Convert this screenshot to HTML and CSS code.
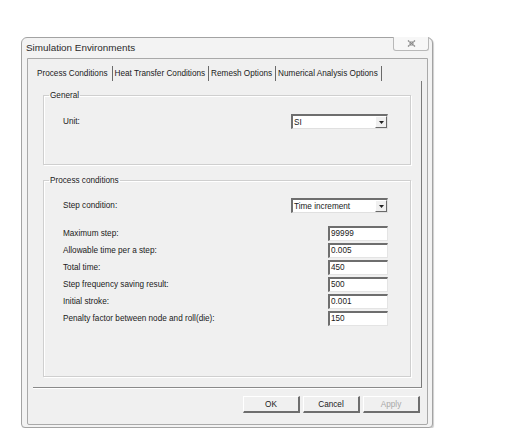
FILE: index.html
```html
<!DOCTYPE html>
<html>
<head>
<meta charset="utf-8">
<link rel="stylesheet" href="styles.css">
</head>
<body>
<div class="window">
  <div class="titlebar">
    <span class="title">Simulation Environments</span>
    <div class="close">
      <svg width="9" height="7" viewBox="0 0 9 7"><path d="M1 0.5 L8 6.5 M8 0.5 L1 6.5" stroke="#8a8a8a" stroke-width="1.3" fill="none"/><rect x="2.5" y="1.5" width="4" height="4" fill="none" stroke="#b5b5b5" stroke-width="0.8"/></svg>
    </div>
  </div>
  <div class="client">
    <div class="tabs">
      <div class="tab sel">Process Conditions</div>
      <div class="tab">Heat Transfer Conditions</div>
      <div class="tab">Remesh Options</div>
      <div class="tab">Numerical Analysis Options</div>
    </div>
    <div class="panel">
      <fieldset class="group g1">
        <legend>General</legend>
        <div class="row combo-row">
          <span class="lbl">Unit:</span>
          <div class="combo"><span class="ctext">SI</span><span class="cbtn"><svg width="5" height="3" viewBox="0 0 5 3"><path d="M0 0 H5 L2.5 3 Z" fill="#222"/></svg></span></div>
        </div>
      </fieldset>
      <fieldset class="group g2">
        <legend>Process conditions</legend>
        <div class="row combo-row">
          <span class="lbl">Step condition:</span>
          <div class="combo"><span class="ctext">Time increment</span><span class="cbtn"><svg width="5" height="3" viewBox="0 0 5 3"><path d="M0 0 H5 L2.5 3 Z" fill="#222"/></svg></span></div>
        </div>
        <div class="fields">
          <div class="row"><span class="lbl">Maximum step:</span><div class="input">99999</div></div>
          <div class="row"><span class="lbl">Allowable time per a step:</span><div class="input">0.005</div></div>
          <div class="row"><span class="lbl">Total time:</span><div class="input">450</div></div>
          <div class="row"><span class="lbl">Step frequency saving result:</span><div class="input">500</div></div>
          <div class="row"><span class="lbl">Initial stroke:</span><div class="input">0.001</div></div>
          <div class="row"><span class="lbl">Penalty factor between node and roll(die):</span><div class="input">150</div></div>
        </div>
      </fieldset>
    </div>
    <div class="buttons">
      <div class="btn">OK</div>
      <div class="btn">Cancel</div>
      <div class="btn dis">Apply</div>
    </div>
  </div>
</div>
</body>
</html>
```
FILE: styles.css
```css
html, body {
  margin: 0;
  padding: 0;
  background: #ffffff;
}
body {
  padding: 37px 0 0 21px;
  font-family: "Liberation Sans", Arial, sans-serif;
  font-size: 8.2px;
  color: #1a1a1a;
}
.window {
  box-sizing: border-box;
  width: 412px;
  height: 391px;
  border: 1px solid #a3a3a3;
  border-radius: 6px 6px 4px 4px;
  background: #f3f3f3;
  box-shadow: 1px 1px 1px #cfcfcf;
  display: flex;
  flex-direction: column;
}
.titlebar {
  height: 20px;
  display: flex;
  align-items: flex-start;
  justify-content: space-between;
  flex-shrink: 0;
}
.title {
  font-size: 9.9px;
  color: #2a2a2a;
  margin: 4px 0 0 4px;
}
.close {
  box-sizing: border-box;
  width: 36px;
  height: 14px;
  margin-right: 3px;
  margin-top: -1px;
  border: 1px solid #b8b8b8;
  border-top: none;
  border-radius: 0 0 3px 3px;
  background: #f7f7f7;
  display: flex;
  align-items: center;
  justify-content: center;
}
.client {
  flex: 1;
  margin: 0 4px 2px 5px;
  border: 1px solid #a9a9a9;
  border-radius: 0 0 2px 2px;
  background: #f0f0f0;
  display: flex;
  flex-direction: column;
}
.tabs {
  display: flex;
  padding: 5px 0 0 5px;
  height: 17px;
  flex-shrink: 0;
}
.tab {
  padding: 3px 3px 0 2px;
  border-right: 1px solid #6a6a6a;
  height: 12px;
  margin-top: 2px;
  white-space: nowrap;
}
.tab.sel {
  padding: 3px 4px 0 4px;
}
.panel {
  box-sizing: border-box;
  margin-left: 5px;
  width: 389px;
  height: 307px;
  border-right: 1px solid #7a7a7a;
  border-bottom: 1px solid #8a8a8a;
  box-shadow: 0 1px 0 #ffffff;
  padding: 10px 10px 0 10px;
  display: flex;
  flex-direction: column;
  gap: 11px;
}
.group {
  margin: 0;
  border: 1px solid #cfcfcf;
  box-shadow: inset 1px 1px 0 #ffffff, 1px 1px 0 #ffffff;
  padding: 0 22px 0 19px;
  min-width: 0;
}
.group legend {
  padding: 0 1px;
  margin-left: -14px;
}
.g1 {
  height: 74px;
  box-sizing: border-box;
}
.g2 {
  height: 201px;
  box-sizing: border-box;
}
.row {
  display: flex;
  align-items: center;
  justify-content: space-between;
}
.g1 .combo-row {
  margin-top: 14px;
}
.g2 .combo-row {
  margin-top: 13px;
}
.combo {
  box-sizing: border-box;
  width: 97px;
  height: 15px;
  background: #ffffff;
  border-top: 2px solid #6e6e6e;
  border-left: 2px solid #6e6e6e;
  border-right: 1px solid #e0e0e0;
  border-bottom: 1px solid #e0e0e0;
  display: flex;
  align-items: center;
  justify-content: space-between;
}
.ctext {
  padding-left: 1px;
}
.cbtn {
  box-sizing: border-box;
  width: 12px;
  height: 12px;
  background: #f0f0f0;
  border-right: 1px solid #6a6a6a;
  border-bottom: 1px solid #6a6a6a;
  border-top: 1px solid #ffffff;
  border-left: 1px solid #ffffff;
  display: flex;
  align-items: center;
  justify-content: center;
}
.fields {
  margin-top: 13px;
  display: flex;
  flex-direction: column;
  gap: 2px;
}
.input {
  box-sizing: border-box;
  width: 60px;
  height: 15px;
  background: #ffffff;
  border-top: 2px solid #6e6e6e;
  border-left: 2px solid #6e6e6e;
  border-right: 1px solid #e4e4e4;
  border-bottom: 1px solid #e4e4e4;
  padding-left: 1px;
  line-height: 12px;
}
.buttons {
  display: flex;
  justify-content: flex-end;
  gap: 3px;
  padding: 8px 7px 0 0;
}
.btn {
  box-sizing: border-box;
  width: 57px;
  height: 17px;
  background: #f0f0f0;
  border-top: 1px solid #ffffff;
  border-left: 1px solid #ffffff;
  border-right: 2px solid #6e6e6e;
  border-bottom: 2px solid #6e6e6e;
  display: flex;
  align-items: center;
  justify-content: center;
}
.btn.dis {
  color: #a8a8a8;
}
```
